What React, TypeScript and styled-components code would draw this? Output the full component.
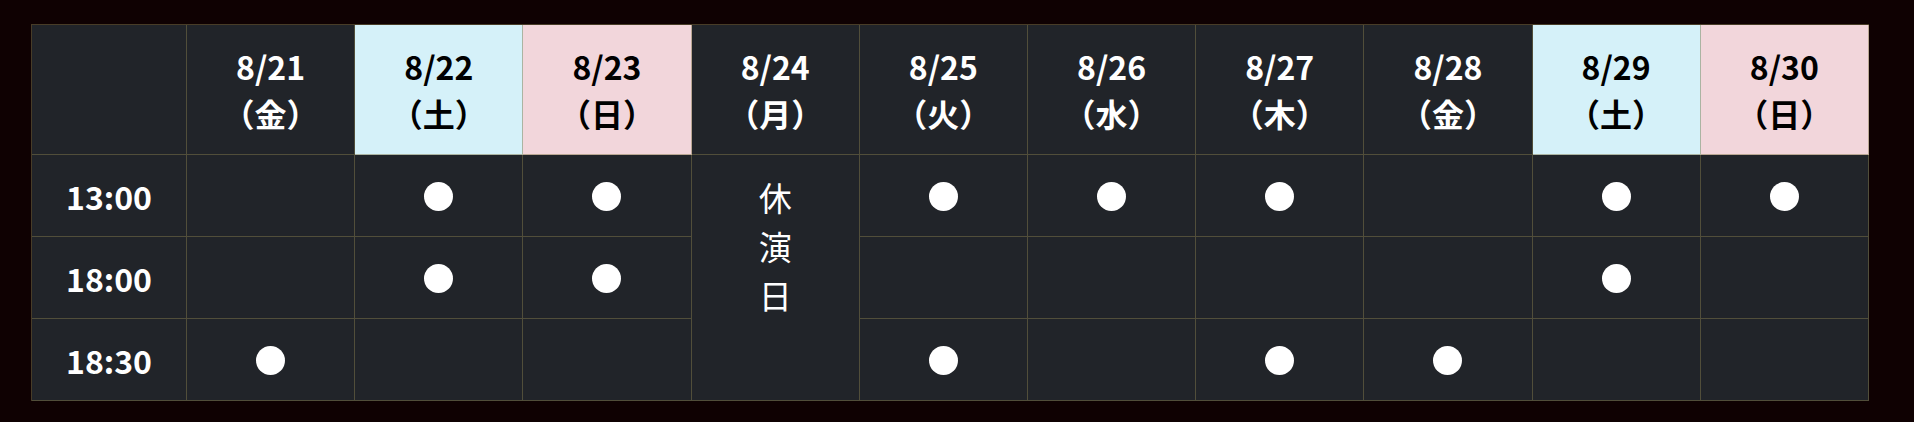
import styled, { createGlobalStyle } from 'styled-components';

const GlobalStyle = createGlobalStyle`
  html, body {
    margin: 0;
    padding: 0;
    background-color: #0f0102;
  }
  body {
    font-family: "Noto Sans CJK JP", "Noto Sans", sans-serif;
    color: #ffffff;
  }
`;

const line = 'rgba(130, 120, 75, 0.5)';

const Page = styled.div`
  padding: 24px 45px 22px 31px;
`;

const Table = styled.table`
  width: 100%;
  table-layout: fixed;
  border-collapse: separate;
  border-spacing: 0;
  border-top: 1px solid ${line};
  border-left: 1px solid ${line};
`;

type Tone = 'dark' | 'sat' | 'sun';

const toneBg: Record<Tone, string> = {
  dark: '#212429',
  sat: '#d5f1f9',
  sun: '#f2d6db',
};

const HeadCell = styled.th<{ $tone: Tone }>`
  height: 129px;
  padding: 0;
  background-color: ${({ $tone }) => toneBg[$tone]};
  color: ${({ $tone }) => ($tone === 'dark' ? '#ffffff' : '#000000')};
  border-right: 1px solid ${line};
  border-bottom: 1px solid ${line};
  font-size: 32px;
  font-weight: 700;
  line-height: 47px;
  text-align: center;
  vertical-align: middle;
`;

const TimeCell = styled.th`
  height: 81px;
  padding: 0;
  background-color: #212429;
  border-right: 1px solid ${line};
  border-bottom: 1px solid ${line};
  font-size: 32px;
  font-weight: 700;
  text-align: center;
  vertical-align: middle;
`;

const Cell = styled.td`
  padding: 0;
  background-color: #212429;
  border-right: 1px solid ${line};
  border-bottom: 1px solid ${line};
  text-align: center;
  vertical-align: middle;
`;

const Mark = styled.span`
  display: inline-block;
  width: 29px;
  height: 29px;
  border-radius: 50%;
  background-color: #ffffff;
  margin-top: 2px;
  vertical-align: middle;
`;

const ClosedText = styled.div`
  font-size: 33px;
  font-weight: 400;
  line-height: 49px;
  width: 1em;
  margin: 0 auto;
  padding-bottom: 63px;
`;

interface Day {
  date: string;
  week: string;
  tone: Tone;
  shows: [boolean, boolean, boolean];
  closed?: boolean;
}

const days: Day[] = [
  { date: '8/21', week: '金', tone: 'dark', shows: [false, false, true] },
  { date: '8/22', week: '土', tone: 'sat', shows: [true, true, false] },
  { date: '8/23', week: '日', tone: 'sun', shows: [true, true, false] },
  { date: '8/24', week: '月', tone: 'dark', shows: [false, false, false], closed: true },
  { date: '8/25', week: '火', tone: 'dark', shows: [true, false, true] },
  { date: '8/26', week: '水', tone: 'dark', shows: [true, false, false] },
  { date: '8/27', week: '木', tone: 'dark', shows: [true, false, true] },
  { date: '8/28', week: '金', tone: 'dark', shows: [false, false, true] },
  { date: '8/29', week: '土', tone: 'sat', shows: [true, true, false] },
  { date: '8/30', week: '日', tone: 'sun', shows: [true, false, false] },
];

const times = ['13:00', '18:00', '18:30'];

function App() {
  return (
    <Page>
      <GlobalStyle />
      <Table>
        <colgroup>
          <col style={{ width: 155 }} />
          {days.map((d) => (
            <col key={d.date} />
          ))}
        </colgroup>
        <thead>
          <tr>
            <HeadCell $tone="dark" />
            {days.map((d) => (
              <HeadCell key={d.date} $tone={d.tone}>
                {d.date}
                <br />（{d.week}）
              </HeadCell>
            ))}
          </tr>
        </thead>
        <tbody>
          {times.map((t, row) => (
            <tr key={t}>
              <TimeCell>{t}</TimeCell>
              {days.map((d) => {
                if (d.closed) {
                  return row === 0 ? (
                    <Cell key={d.date} rowSpan={3}>
                      <ClosedText>休演日</ClosedText>
                    </Cell>
                  ) : null;
                }
                return <Cell key={d.date}>{d.shows[row] && <Mark />}</Cell>;
              })}
            </tr>
          ))}
        </tbody>
      </Table>
    </Page>
  );
}

export default App;
